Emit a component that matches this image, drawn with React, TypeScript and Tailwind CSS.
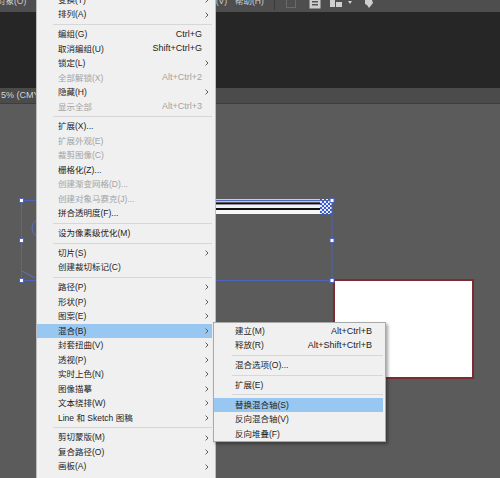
import React from "react";

type Item =
  | { sep: true }
  | { label: string; shortcut?: string; sub?: boolean; disabled?: boolean; active?: boolean; sep?: false };

const mainItems: Item[] = [
  { label: "变换(T)", sub: true },
  { label: "排列(A)", sub: true },
  { sep: true },
  { label: "编组(G)", shortcut: "Ctrl+G" },
  { label: "取消编组(U)", shortcut: "Shift+Ctrl+G" },
  { label: "锁定(L)", sub: true },
  { label: "全部解锁(X)", shortcut: "Alt+Ctrl+2", disabled: true },
  { label: "隐藏(H)", sub: true },
  { label: "显示全部", shortcut: "Alt+Ctrl+3", disabled: true },
  { sep: true },
  { label: "扩展(X)..." },
  { label: "扩展外观(E)", disabled: true },
  { label: "裁剪图像(C)", disabled: true },
  { label: "栅格化(Z)..." },
  { label: "创建渐变网格(D)...", disabled: true },
  { label: "创建对象马赛克(J)...", disabled: true },
  { label: "拼合透明度(F)..." },
  { sep: true },
  { label: "设为像素级优化(M)" },
  { sep: true },
  { label: "切片(S)", sub: true },
  { label: "创建裁切标记(C)" },
  { sep: true },
  { label: "路径(P)", sub: true },
  { label: "形状(P)", sub: true },
  { label: "图案(E)", sub: true },
  { label: "混合(B)", sub: true, active: true },
  { label: "封套扭曲(V)", sub: true },
  { label: "透视(P)", sub: true },
  { label: "实时上色(N)", sub: true },
  { label: "图像描摹", sub: true },
  { label: "文本绕排(W)", sub: true },
  { label: "Line 和 Sketch 图稿", sub: true },
  { sep: true },
  { label: "剪切蒙版(M)", sub: true },
  { label: "复合路径(O)", sub: true },
  { label: "画板(A)", sub: true },
];

const subItems: Item[] = [
  { label: "建立(M)", shortcut: "Alt+Ctrl+B" },
  { label: "释放(R)", shortcut: "Alt+Shift+Ctrl+B" },
  { sep: true },
  { label: "混合选项(O)..." },
  { sep: true },
  { label: "扩展(E)" },
  { sep: true },
  { label: "替换混合轴(S)", active: true },
  { label: "反向混合轴(V)" },
  { label: "反向堆叠(F)" },
];

function Chevron() {
  return (
    <svg width="4" height="6" viewBox="0 0 4 6" className="block">
      <polyline points="0.6,0.6 3,3 0.6,5.4" fill="none" stroke="#5c5c5c" strokeWidth="1" />
    </svg>
  );
}

function MainRow({ item }: { item: Item }) {
  if (item.sep) {
    return (
      <div className="h-[5.25px] flex items-center pl-[16px]">
        <div className="h-px w-full bg-[#d7d7d7]" />
      </div>
    );
  }
  return (
    <div
      className={`h-[14.5px] flex items-center pl-[21px] pr-[1px] ${item.active ? "bg-[#98c8f2]" : ""} ${
        item.disabled ? "text-[#a3a3a3]" : "text-[#1c1c1c]"
      }`}
    >
      <span className="flex-1 text-[8.5px] leading-none whitespace-nowrap">{item.label}</span>
      {item.shortcut && <span className="text-[9px] leading-none whitespace-nowrap">{item.shortcut}</span>}
      <span className="w-[9px] flex justify-center">{item.sub && <Chevron />}</span>
    </div>
  );
}

function SubRow({ item }: { item: Item }) {
  if (item.sep) {
    return (
      <div className="h-[5.25px] flex items-center pl-[18px]">
        <div className="h-px w-full bg-[#d7d7d7]" />
      </div>
    );
  }
  return (
    <div
      className={`h-[14.5px] flex items-center pl-[21px] pr-[11px] text-[#1c1c1c] ${item.active ? "bg-[#98c8f2]" : ""}`}
    >
      <span className="flex-1 text-[8.5px] leading-none whitespace-nowrap">{item.label}</span>
      {item.shortcut && <span className="text-[9px] leading-none whitespace-nowrap">{item.shortcut}</span>}
    </div>
  );
}

function Checker() {
  const cells: React.ReactElement[] = [];
  for (let r = 0; r < 8; r++) {
    for (let c = 0; c < 6; c++) {
      if ((r + c) % 2 === 0) {
        cells.push(<rect key={`${r}-${c}`} x={320 + c * 2} y={200 + r * 2} width="2" height="2" fill="#3a5ad6" />);
      }
    }
  }
  return (
    <g>
      <rect x="320" y="200" width="12" height="15" fill="#e8ecff" />
      {cells}
    </g>
  );
}

function Handle({ x, y }: { x: number; y: number }) {
  return <rect x={x - 2} y={y - 2} width="4" height="4" fill="#ffffff" stroke="#4d64b8" strokeWidth="1" />;
}

export default function App() {
  return (
    <div className="relative w-[500px] h-[478px] overflow-hidden flex flex-col bg-[#5b5b5b] font-['Liberation_Sans','Noto_Sans_CJK_SC',sans-serif]">
      {/* top menu bar */}
      <div className="h-[12px] bg-[#4e4e4e] flex items-start overflow-hidden text-[#cfcfcf]">
        <div className="w-[227px] flex justify-between -mt-[3px] text-[8.5px] leading-none">
          <span className="-ml-[3px]">对象(O)</span>
          <span>视图(V)</span>
        </div>
        <span className="ml-[8px] -mt-[3px] text-[8.5px] leading-none">帮助(H)</span>
        <div className="ml-[10px] w-px h-[10px] bg-[#3a3a3a]" />
        <div className="ml-[11px] flex items-start gap-[0px] -mt-[1px]">
          <svg width="10" height="9" viewBox="0 0 10 9" className="block">
            <rect x="0.5" y="0.5" width="9" height="8" fill="none" stroke="#6a6a6a" />
          </svg>
          <svg width="12" height="10" viewBox="0 0 12 10" className="block ml-[13px]">
            <rect x="0.5" y="0" width="11" height="9.5" fill="#cfcfcf" />
            <rect x="3" y="2" width="6" height="1.5" fill="#555" />
            <rect x="3" y="5" width="6" height="1.5" fill="#555" />
          </svg>
          <svg width="13" height="9" viewBox="0 0 13 9" className="block ml-[9px]">
            <rect x="0" y="0" width="5" height="8" fill="#cfcfcf" />
            <rect x="6" y="3" width="6" height="5" fill="#cfcfcf" />
          </svg>
          <svg width="4" height="4" viewBox="0 0 4 4" className="block ml-[5px] mt-[2px]">
            <polygon points="0,0 4,0 2,3" fill="#cfcfcf" />
          </svg>
          <svg width="10" height="10" viewBox="0 0 10 10" className="block ml-[12px]">
            <path d="M1 1 L8 1 L9 4 L5 9 L3 6 L1 5 Z" fill="#cfcfcf" />
          </svg>
        </div>
      </div>

      {/* dark control panel */}
      <div className="h-[76px] bg-[#262626]" />

      {/* document tab */}
      <div className="h-[16px] bg-[#4b4b4b] border-b border-[#3d3d3d] flex items-center">
        <span className="ml-[1px] text-[9px] leading-none text-[#d4d4d4] whitespace-nowrap">5% (CMYK/预览)</span>
      </div>

      {/* canvas */}
      <div className="relative flex-1 bg-[#5b5b5b]">
        <svg className="absolute inset-0" width="500" height="373" viewBox="0 105 500 373">
          {/* artboard object */}
          <rect x="334" y="281" width="139" height="98" fill="#ffffff" stroke="#7a2b34" strokeWidth="2" />
          {/* blend stripes */}
          <rect x="210" y="200" width="110" height="2.5" fill="#c6cdee" />
          <rect x="210" y="202.5" width="110" height="1" fill="#f4f4f4" />
          <rect x="210" y="203.5" width="110" height="2" fill="#111111" />
          <rect x="210" y="205.5" width="110" height="3.5" fill="#eef0fa" />
          <rect x="210" y="209" width="110" height="2" fill="#111111" />
          <rect x="210" y="211" width="110" height="4" fill="#f7f7f7" />
          <Checker />
          {/* selection */}
          <rect x="21.5" y="201.5" width="310.5" height="80" fill="none" stroke="#4d64b8" strokeWidth="1" />
          <path d="M37 221 A 9 9 0 0 0 37 237" fill="none" stroke="#5a72c8" strokeWidth="1" />
          <line x1="22" y1="272" x2="35" y2="279" stroke="#5a72c8" strokeWidth="1" />
          <Handle x={21.5} y={201.5} />
          <Handle x={21.5} y={241.5} />
          <Handle x={21.5} y={281.5} />
          <Handle x={332} y={201.5} />
          <Handle x={332} y={241.5} />
          <Handle x={332} y={281.5} />
        </svg>
      </div>

      {/* main context menu */}
      <div className="absolute left-[36px] top-[-7.25px] w-[180px] bg-[#f0f0f0] border-x border-[#bdbdbd] pr-[3px]">
        {mainItems.map((it, i) => (
          <MainRow key={i} item={it} />
        ))}
        <div className="h-[10px]" />
      </div>

      {/* submenu */}
      <div className="absolute left-[213px] top-[322px] w-[173px] h-[120px] bg-[#f0f0f0] border border-[#a9a9a9] shadow-[2px_2px_3px_rgba(0,0,0,0.35)] pt-[0.75px] pr-[2px]">
        {subItems.map((it, i) => (
          <SubRow key={i} item={it} />
        ))}
      </div>
    </div>
  );
}
